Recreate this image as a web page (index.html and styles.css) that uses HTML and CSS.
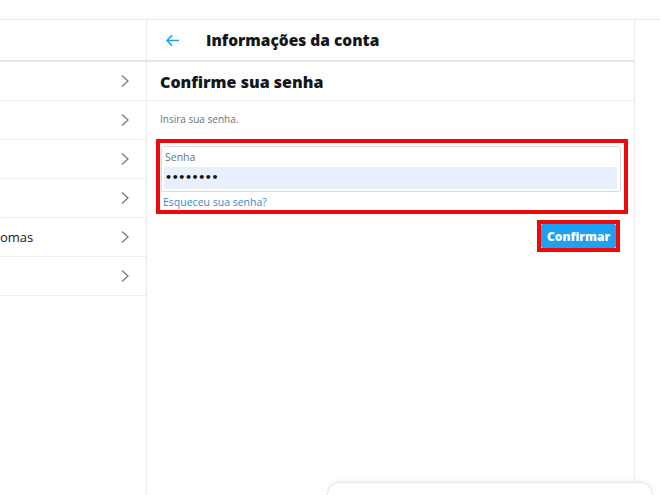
FILE: index.html
```html
<!DOCTYPE html>
<html lang="pt-BR">
  <head>
    <meta charset="UTF-8" />
    <title>Informações da conta</title>
    <link rel="stylesheet" href="styles.css">
  </head>
  <body>
    <div class="topbar"></div>

    <div class="layout">
      <div class="sidebar">
        <div class="side-head"></div>
        <div class="side-row"><span></span><svg class="chev" viewBox="0 0 10 14"><path d="M2 1.5 L8 7 L2 12.5" /></svg></div>
        <div class="side-row"><span></span><svg class="chev" viewBox="0 0 10 14"><path d="M2 1.5 L8 7 L2 12.5" /></svg></div>
        <div class="side-row"><span></span><svg class="chev" viewBox="0 0 10 14"><path d="M2 1.5 L8 7 L2 12.5" /></svg></div>
        <div class="side-row"><span></span><svg class="chev" viewBox="0 0 10 14"><path d="M2 1.5 L8 7 L2 12.5" /></svg></div>
        <div class="side-row"><span>omas</span><svg class="chev" viewBox="0 0 10 14"><path d="M2 1.5 L8 7 L2 12.5" /></svg></div>
        <div class="side-row"><span></span><svg class="chev" viewBox="0 0 10 14"><path d="M2 1.5 L8 7 L2 12.5" /></svg></div>
      </div>

      <div class="main">
        <div class="main-head">
          <svg class="back" viewBox="0 0 16 14"><path d="M15 7 H2 M7.5 1.5 L2 7 L7.5 12.5" /></svg>
          <h1>Informações da conta</h1>
        </div>
        <div class="section-title">Confirme sua senha</div>
        <p class="hint">Insira sua senha.</p>

        <div class="mark">
          <div class="field">
            <label>Senha</label>
            <div class="pass">&#8226;&#8226;&#8226;&#8226;&#8226;&#8226;&#8226;&#8226;</div>
          </div>
          <a class="forgot" href="#">Esqueceu sua senha?</a>
        </div>

        <div class="actions">
          <div class="mark-btn">
            <button>Confirmar</button>
          </div>
        </div>
      </div>

      <div class="aside"></div>
    </div>

    <div class="drawer"></div>
  </body>
</html>
```

FILE: styles.css
```css
* {
  box-sizing: border-box;
}

html,
body {
  width: 100%;
  height: 100%;
  margin: 0;
  background: #fff;
  overflow: hidden;
  font-family: "Open Sans", "Noto Sans", sans-serif;
  color: #14171a;
}

.topbar {
  height: 20px;
  border-bottom: 1px solid #e6e8ea;
}

.layout {
  display: flex;
  height: calc(100% - 20px);
}

.sidebar {
  width: 147px;
  border-right: 1px solid #e9ecee;
}

.side-head {
  height: 42px;
  border-bottom: 2px solid #e3e6e8;
}

.side-row {
  display: flex;
  align-items: center;
  justify-content: space-between;
  height: 39px;
  padding-right: 16px;
  border-bottom: 1px solid #eceef0;
  font-size: 13px;
}

.chev {
  width: 10px;
  height: 14px;
}

.chev path {
  fill: none;
  stroke: #6d7880;
  stroke-width: 1.2;
}

.main {
  width: 488px;
  border-right: 1px solid #e9ecee;
}

.main-head {
  display: flex;
  align-items: center;
  height: 42px;
  padding-left: 18px;
  border-bottom: 2px solid #e3e6e8;
}

.back {
  width: 15px;
  height: 13px;
  margin-right: 26px;
}

.back path {
  fill: none;
  stroke: #1da1f2;
  stroke-width: 1.6;
}

.main-head h1 {
  margin: 0;
  font-size: 15.5px;
  font-weight: 800;
}

.section-title {
  height: 39px;
  padding: 9px 13px 0;
  font-size: 16px;
  font-weight: 800;
  border-bottom: 1px solid #eceef0;
}

.hint {
  margin: 0;
  padding: 11px 13px 13px;
  font-size: 10px;
  color: #66737d;
}

.mark {
  margin: 0 6px 0 9px;
  padding: 3px 3px 1px 1px;
  border: 4px solid #ee0a0a;
}

.field {
  padding: 1px 3px 2px 2px;
  border: 1px solid #d6dadd;
  border-radius: 3px;
}

.field label {
  display: block;
  padding: 2px 0 3px 1px;
  font-size: 10.5px;
  color: #66737d;
}

.pass {
  height: 22px;
  padding-left: 1px;
  background: #e8f0fd;
  font-family: "DejaVu Sans", sans-serif;
  font-size: 11px;
  font-weight: 700;
  line-height: 22px;
  letter-spacing: -0.4px;
  color: #111;
}

.forgot {
  display: block;
  padding: 3px 0 0 2px;
  font-size: 10.5px;
  color: #2b8fd6;
  text-decoration: none;
}

.actions {
  display: flex;
  justify-content: flex-end;
  padding: 6px 14px 0 0;
}

.mark-btn {
  border: 4px solid #ee0a0a;
}

.mark-btn button {
  display: block;
  width: 75px;
  height: 24px;
  padding: 0;
  border: 0;
  border-radius: 2px;
  background: #1da1f2;
  color: #fff;
  font-family: inherit;
  font-size: 12px;
  font-weight: 800;
}

.aside {
  flex: 1;
}

.drawer {
  position: absolute;
  left: 327px;
  top: 482px;
  width: 326px;
  height: 13px;
  background: #fff;
  border: 1px solid #e6e8ea;
  border-bottom: 0;
  border-radius: 14px 14px 0 0;
  box-shadow: 0 -1px 5px rgba(0, 0, 0, 0.07);
}
```
